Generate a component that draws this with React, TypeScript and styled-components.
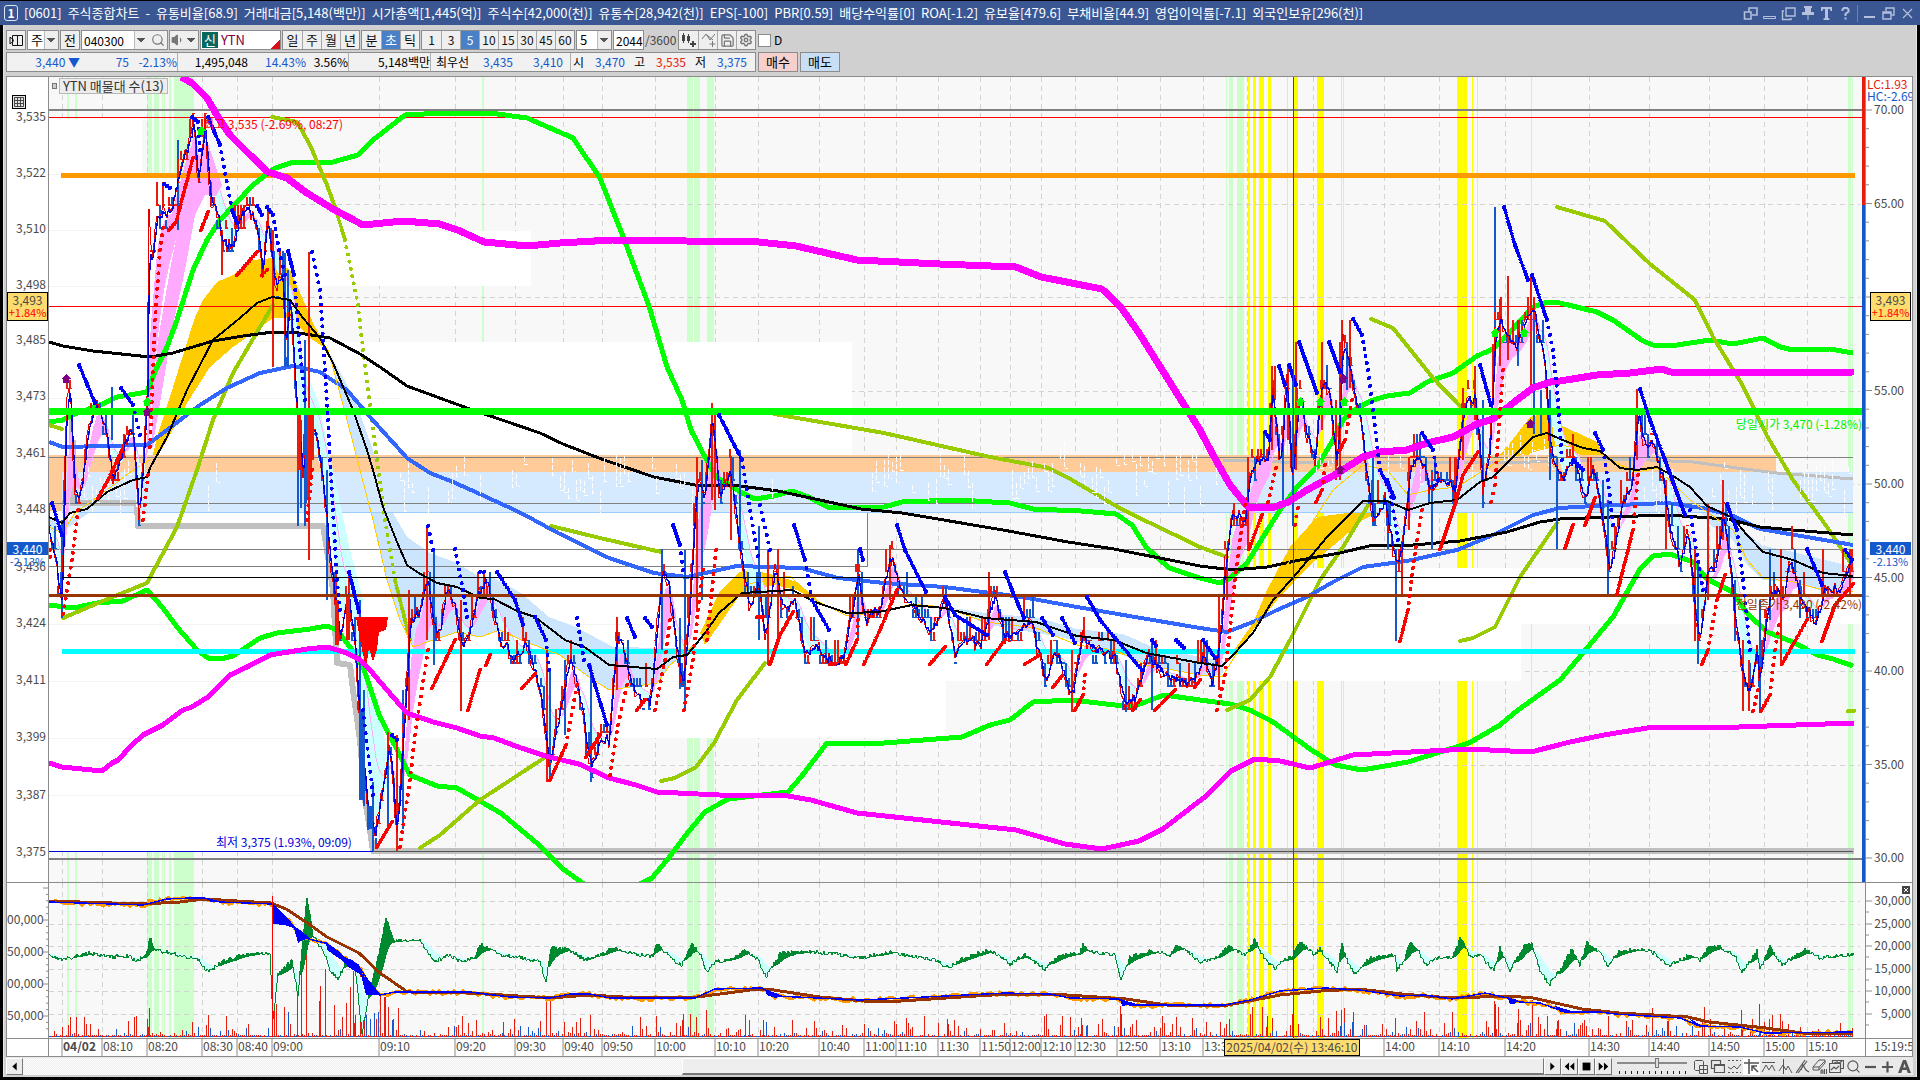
import React from "react";
import styled, { createGlobalStyle, css } from "styled-components";
import { Search, Settings, Save, Pin, Volume1 } from "lucide-react";

/* ---------- palette ---------- */
const C = {
  title: "#3a5693",
  bar: "#d0d0d0",
  line: "#8c8c8c",
  plot: "#f8f8f8",
  grid: "#d3d3d3",
  red: "#e81c0c",
  blue: "#1458cc",
  ink: "#4a4a4a",
  mint: "#ccffcc",
  badge: "#ffdc6e",
};
const FONT = '"Noto Sans CJK KR", "Liberation Sans", sans-serif';

const Global = createGlobalStyle`
  *, *::before, *::after { box-sizing: border-box; }
  html, body, #root { margin: 0; height: 100%; }
  body { background: #000; font-family: ${FONT}; font-size: 12px; line-height: 16px; color: #000; }
  button, input, select { font: inherit; color: inherit; margin: 0; padding: 0; border-radius: 0; }
`;

/* ---------- window frame ---------- */
const Frame = styled.div`
  display: flex;
  flex-direction: column;
  height: 100vh;
  min-height: 560px;
  padding: 1px 0 3px;
  background: #000;
`;
const TitleBar = styled.header`
  display: flex;
  align-items: center;
  justify-content: space-between;
  height: 24px;
  padding: 0 5px 0 4px;
  background: ${C.title};
  color: #fff;
`;
const TitleText = styled.h1`
  display: flex;
  align-items: center;
  gap: 6px;
  margin: 0;
  font-size: 13px;
  font-weight: 400;
  white-space: nowrap;
`;
const WinIndex = styled.span`
  width: 14px;
  height: 16px;
  border: 1px solid #dfe6f5;
  border-radius: 3px;
  font-size: 12px;
  font-weight: 700;
  line-height: 14px;
  text-align: center;
`;
const TitleTools = styled.div`
  display: flex;
  align-items: center;
  gap: 4px;
`;
const TitleButton = styled.button`
  display: grid;
  place-items: center;
  width: 15px;
  height: 18px;
  border: 0;
  background: none;
  color: #b4c0dc;
  svg { display: block; }
`;
const TitleRule = styled.span`
  width: 1px;
  height: 17px;
  background: #6d82b3;
`;
const Body = styled.main`
  flex: 1;
  min-height: 0;
  display: flex;
  flex-direction: column;
  margin: 0 3px;
  padding: 0 3px 2px 2px;
  background: ${C.bar};
  border-left: 1px solid #e6e6e6;
  border-right: 1px solid #e6e6e6;
`;

/* ---------- tool bar ---------- */
const ToolRow = styled.div`
  display: flex;
  align-items: center;
  height: 27px;
  padding-top: 3px;
  gap: 1px;
  font-size: 13px;
`;
const Group = styled.div`
  display: flex;
  height: 20px;
  border: 1px solid ${C.line};
  background: #f2f2f2;
`;
const ToolButton = styled.button<{ $w?: number; $on?: boolean; $dim?: boolean; $num?: boolean }>`
  display: grid;
  place-items: center;
  width: ${(p) => p.$w ?? 19}px;
  height: 18px;
  border: 0;
  background: ${(p) => (p.$on ? "#4a80c8" : "#efefef")};
  color: ${(p) => (p.$on ? "#fff" : p.$dim ? "#777" : "#111")};
  font-size: ${(p) => (p.$num ? 12 : 13)}px;
  & + & { border-left: 1px solid #a8a8a8; }
`;
const Pick = styled.select<{ $w: number }>`
  width: ${(p) => p.$w}px;
  height: 18px;
  padding: 0 0 0 3px;
  border: 0;
  appearance: none;
  background: linear-gradient(#555, #555) no-repeat right 3px top 7px / 8px 1px,
    linear-gradient(#555, #555) no-repeat right 4px top 8px / 6px 1px,
    linear-gradient(#555, #555) no-repeat right 5px top 9px / 4px 1px,
    linear-gradient(#555, #555) no-repeat right 6px top 10px / 2px 1px,
    linear-gradient(#eee, #eee) no-repeat right 0 top 0 / 13px 18px,
    linear-gradient(#bbb, #bbb) no-repeat right 13px top 0 / 1px 18px, #fff;
`;
const Field = styled.input<{ $w: number }>`
  width: ${(p) => p.$w}px;
  height: 18px;
  padding-left: 2px;
  border: 0;
  outline: 0;
  background: #fff;
  font-size: 12px;
`;
const NameField = styled.div`
  display: flex;
  align-items: center;
  width: 81px;
  height: 20px;
  border: 1px solid ${C.line};
  background: linear-gradient(135deg, #fff 0 90%, #d8101c 90%);
  color: #7a0040;
`;
const NewMark = styled.span`
  width: 16px;
  height: 16px;
  margin: 0 3px 0 1px;
  background: #08685e;
  color: #fff;
  text-align: center;
`;
const TickLabel = styled.label`
  display: flex;
  align-items: center;
  gap: 3px;
  padding-left: 1px;
  font-size: 12px;
  input {
    width: 13px;
    height: 13px;
    border: 1px solid ${C.line};
    background: #fff;
    appearance: none;
  }
`;
const Muted = styled.span`
  width: 32px;
  color: #444;
  font-size: 12px;
`;

/* ---------- quote strip ---------- */
const QuoteRow = styled.div`
  display: flex;
  gap: 2px;
  height: 20px;
  margin-bottom: 4px;
`;
const Quotes = styled.dl`
  display: flex;
  align-items: center;
  height: 20px;
  width: 750px;
  margin: 0;
  border: 1px solid ${C.line};
  background: #f1f1f1;
  white-space: nowrap;
`;
const Quote = styled.dd<{ $w: number; $tone?: string; $rule?: boolean }>`
  width: ${(p) => p.$w}px;
  height: 18px;
  margin: 0;
  line-height: 18px;
  text-align: right;
  color: ${(p) => p.$tone ?? "#000"};
  ${(p) => p.$rule && css`border-right: 1px solid #b0b0b0;`}
`;
const OrderButton = styled.button<{ $bg: string }>`
  width: 40px;
  height: 20px;
  border: 1px solid ${C.line};
  background: ${(p) => p.$bg};
  font-size: 13px;
  line-height: 16px;
`;

/* ---------- chart panel ---------- */
const Panel = styled.section`
  flex: 1;
  min-height: 0;
  display: grid;
  grid-template-columns: 42px minmax(0, 1fr) 47px;
  grid-template-rows: minmax(0, 1fr) 156px 17px;
  border: 1px solid ${C.line};
  background: #fff;
`;
const AxisCell = styled.div<{ $side: "left" | "right"; $last?: boolean }>`
  position: relative;
  min-width: 0;
  min-height: 0;
  overflow: hidden;
  border-bottom: ${(p) => (p.$last ? 0 : 1)}px solid ${C.line};
  ${(p) =>
    p.$side === "left"
      ? css`border-right: 1px solid ${C.line};`
      : css`border-left: 1px solid ${C.line};`}
`;
const PlotCell = styled.div<{ $last?: boolean }>`
  position: relative;
  min-width: 0;
  min-height: 0;
  overflow: hidden;
  border-bottom: ${(p) => (p.$last ? 0 : 1)}px solid ${C.line};
  background: ${(p) => (p.$last ? "#fff" : C.plot)};
`;
const Sheet = styled.svg`
  display: block;
  width: 100%;
  height: 100%;
`;
const Overlay = styled(Sheet)`
  position: absolute;
  inset: 0;
`;
const AxisText = styled.text<{ $tone?: string; $bold?: boolean }>`
  font-family: ${FONT};
  font-size: 12px;
  font-weight: ${(p) => (p.$bold ? 700 : 400)};
  fill: ${(p) => p.$tone ?? C.ink};
`;
const Legend = styled.div`
  position: absolute;
  top: 1px;
  left: 3px;
  display: flex;
  align-items: center;
  gap: 2px;
  &::before {
    content: "";
    width: 5px;
    height: 6px;
    border: 1px solid #777;
    background: #ccc;
  }
`;
const LegendBox = styled.span`
  padding: 0 3px;
  border: 1px solid #b8b8b8;
  background: #ededed;
  color: #333;
  font-size: 13px;
  line-height: 14px;
`;
const GridToggle = styled.button`
  position: absolute;
  top: 18px;
  left: 5px;
  width: 14px;
  height: 14px;
  border: 1px solid #000;
  background: #e4e4e4;
  svg { display: block; }
`;
const PriceTag = styled.div<{ $top: string; $left: number }>`
  position: absolute;
  top: ${(p) => p.$top};
  left: ${(p) => p.$left}px;
  width: 41px;
  height: 29px;
  border: 1px solid #000;
  background: ${C.badge};
  color: ${C.ink};
  line-height: 13px;
  text-align: center;
  white-space: nowrap;
  em { display: block; color: red; font-size: 11px; font-style: normal; }
`;
const LastTag = styled.div<{ $top: string; $left: number }>`
  position: absolute;
  top: ${(p) => p.$top};
  left: ${(p) => p.$left}px;
  width: 41px;
  color: ${C.blue};
  font-size: 11px;
  line-height: 13px;
  text-align: center;
  white-space: nowrap;
  b {
    display: block;
    height: 13px;
    background: ${C.blue};
    color: #fff;
    font-size: 12px;
    font-weight: 400;
  }
`;
const CloseSub = styled.button`
  position: absolute;
  top: 3px;
  right: 2px;
  display: grid;
  width: 8px;
  height: 8px;
  border: 0;
  background: #444;
  color: #fff;
`;
const TimeTag = styled.div`
  position: absolute;
  top: 0;
  left: 64.7%;
  width: 136px;
  height: 17px;
  border: 1px solid #000;
  background: ${C.badge};
  color: ${C.ink};
  line-height: 14px;
  text-align: center;
  white-space: nowrap;
`;

/* ---------- bottom strip ---------- */
const BottomRow = styled.footer`
  display: flex;
  align-items: center;
  height: 18px;
  background: #e9e9e9;
`;
const NavButton = styled.button`
  display: grid;
  place-items: center;
  flex: none;
  width: 17px;
  height: 17px;
  border: 1px solid;
  border-color: #fff #777 #777 #fff;
  background: #ececec;
`;
const Track = styled.div`
  flex: 1;
  display: flex;
  justify-content: flex-end;
  height: 17px;
  background: repeating-conic-gradient(#ffffff 0 25%, #ececec 0 50%) 0 0 / 2px 2px;
`;
const Thumb = styled.div`
  width: 56.7%;
  height: 17px;
  border: 1px solid;
  border-color: #fff #777 #777 #fff;
  border-bottom-width: 2px;
  background: #eeeeee;
`;
const Zoomer = styled.label`
  width: 80px;
  height: 17px;
  padding: 0 5px;
  input {
    display: block;
    width: 70px;
    height: 11px;
    margin: 0;
    appearance: none;
    background: linear-gradient(#8a8a8a, #8a8a8a) no-repeat 0 4px / 100% 2px;
  }
  input::-webkit-slider-thumb {
    appearance: none;
    width: 4px;
    height: 10px;
    border: 1px solid #777;
    background: #ddd;
  }
  &::after {
    content: "";
    display: block;
    width: 67px;
    height: 3px;
    margin: 2px 0 0 2px;
    background: repeating-linear-gradient(90deg, #222 0 1px, transparent 1px 6px);
  }
`;
const IconButton = styled.button<{ $on?: boolean }>`
  display: grid;
  place-items: center;
  width: 17px;
  height: 17px;
  border: 0;
  background: ${(p) => (p.$on ? "#fff" : "none")};
  color: #555;
  svg { display: block; }
`;

/* ---------- helpers ---------- */
type Pt = [number, number];
const pts = (s: string): Pt[] =>
  s.trim().split(/\s+/).map((p) => p.split(",").map(Number) as Pt);
const join = (a: Pt[]) => a.map((p) => `${p[0].toFixed(1)},${p[1].toFixed(1)}`).join(" ");
const rng = (seed: number) => () => {
  seed = (seed * 1664525 + 1013904223) % 4294967296;
  return seed / 4294967296;
};
const sample = (a: Pt[], step: number): Pt[] => {
  const out: Pt[] = [];
  let i = 0;
  for (let x = a[0][0]; x <= a[a.length - 1][0]; x += step) {
    while (i < a.length - 2 && a[i + 1][0] < x) i++;
    const [x0, y0] = a[i];
    const [x1, y1] = a[i + 1];
    out.push([x, y0 + ((y1 - y0) * (x - x0)) / (x1 - x0 || 1)]);
  }
  return out;
};
const ema = (a: Pt[], n: number): Pt[] => {
  let v = a[0][1];
  return a.map(([x, y]) => {
    v += (y - v) * (2 / (n + 1));
    return [x, v];
  });
};
const between = (a: Pt[], b: Pt[], above: boolean) =>
  a
    .map(([x, y], i) => {
      const w = b[i][1];
      return (above ? y < w - 1 : y > w + 1) ? `M${x} ${y.toFixed(1)}V${w.toFixed(1)}` : "";
    })
    .join("");

/* plot coordinate windows */
const MAIN = { x: 49, y: 77, w: 1816, h: 805 };
const SUB = { x: 49, y: 883, w: 1816, h: 155 };
const px = (x: number) => `${((x - MAIN.x) / MAIN.w) * 100}%`;
const py = (y: number) => `${((y - MAIN.y) / MAIN.h) * 100}%`;
const sy = (y: number) => `${((y - SUB.y) / SUB.h) * 100}%`;

/* ---------- data ---------- */
const TIMES: [number, string][] = [
  [62, "04/02"], [102, "08:10"], [147, "08:20"], [202, "08:30"], [237, "08:40"], [272, "09:00"],
  [379, "09:10"], [455, "09:20"], [515, "09:30"], [563, "09:40"], [602, "09:50"], [655, "10:00"],
  [715, "10:10"], [758, "10:20"], [819, "10:40"], [864, "11:00"], [896, "11:10"], [938, "11:30"],
  [980, "11:50"], [1010, "12:00"], [1041, "12:10"], [1075, "12:30"], [1117, "12:50"],
  [1160, "13:10"], [1203, "13:30"], [1247, ""], [1313, ""], [1384, "14:00"], [1439, "14:10"],
  [1505, "14:20"], [1589, "14:30"], [1649, "14:40"], [1709, "14:50"], [1764, "15:00"], [1807, "15:10"],
];
const PRICES: [number, string][] = [
  [117, "3,535"], [173, "3,522"], [229, "3,510"], [285, "3,498"], [340, "3,485"], [396, "3,473"],
  [453, "3,461"], [509, "3,448"], [567, "3,436"], [623, "3,424"], [680, "3,411"], [737, "3,399"],
  [795, "3,387"], [852, "3,375"],
];
const RATES = [70, 65, 60, 55, 50, 45, 40, 35, 30].map(
  (v, i) => [110 + i * 93.5, `${v}.00`] as [number, string]
);
const VOLS: [number, string][] = [
  [901, "30,000"], [924, "25,000"], [946, "20,000"], [969, "15,000"], [991, "10,000"], [1014, "5,000"],
];
const MINT: Pt[] = pts(
  "67,2 75,2 147,5 154,5 162,1 164,1 169,2 174,20 482,2 687,6 694,6 707,7 1226,1 1229,4 1237,7 1848,3 1852,1"
);
const SUN: Pt[] = pts(
  "1248,2 1253,3 1259,5 1268,3 1287,1 1294,4 1317,7 1341,1 1343,1 1457,10 1472,1 1477,1 1531,1"
);
const PROFILE: [number, number, number][] = [
  [119, 174, 142], [174, 231, 207], [231, 286, 531], [286, 342, 290], [342, 398, 852], [398, 455, 852],
  [511, 568, 867], [568, 624, 1863], [624, 681, 1521], [681, 738, 946], [738, 795, 415], [795, 851, 372],
];

const magentaTop = `181,77 192,83 207,98 218,117 230,135 250,155 268,172 287,178 307,193 333,209 350,218 363,225
 403,221 440,224 460,231 484,242 527,246 560,243 612,240 759,242 796,246 857,260 940,264 1016,267 1041,277 1102,289
 1120,306 1139,333 1176,392 1200,430 1213,455 1230,485 1248,507 1272,508 1288,502 1307,490 1338,473 1363,457
 1380,452 1407,450 1427,443 1453,437 1477,424 1493,419 1513,403 1533,388 1550,382 1560,381 1597,375 1630,373
 1662,369 1670,372 1713,373 1854,372`;
const magentaLow = `49,763 62,767 102,771 112,763 118,760 132,745 143,735 163,725 183,710 192,707 208,697 217,688
 230,675 247,667 270,655 307,649 327,647 347,653 360,660 370,670 387,690 407,713 433,722 457,728 480,736 494,738
 521,748 549,757 579,764 609,778 636,785 657,792 719,795 788,796 811,800 857,813 1016,830 1065,844 1102,849
 1139,841 1163,829 1206,796 1231,771 1255,759 1280,761 1310,768 1353,755 1469,749 1531,752 1570,742 1604,735
 1653,727 1739,727 1854,723`;
const greenTop = `49,422 63,420 72,415 100,405 117,397 147,392 157,367 167,347 177,320 193,270 207,240 220,220
 253,185 273,169 293,162 333,162 358,155 373,140 405,115 443,113 490,113 527,118 573,138 600,178 624,239 649,306
 667,367 682,400 691,430 705,457 716,477 730,485 742,493 755,499 774,496 792,491 811,498 827,507 884,507 902,502
 957,500 1010,503 1033,509 1081,511 1116,514 1132,525 1146,547 1169,568 1200,578 1220,583 1230,578 1247,563
 1263,537 1280,510 1297,487 1317,467 1333,440 1343,420 1357,408 1373,400 1387,396 1410,393 1427,382 1453,373
 1477,356 1493,349 1510,332 1533,307 1547,302 1560,303 1597,312 1613,320 1643,341 1653,345 1677,345 1710,340
 1733,344 1763,338 1780,347 1793,350 1830,349 1853,353`;
const greenLow = `49,605 73,608 97,603 123,601 147,590 163,608 177,627 197,650 208,658 220,659 233,656 260,638
 277,633 310,629 327,626 337,630 350,647 363,667 380,717 392,740 410,775 437,786 457,788 480,801 502,814 539,845
 563,869 584,884`;
const greenLow2 = `640,884 652,878 667,860 685,836 705,812 728,799 788,792 801,777 827,743 884,743 962,737 990,725
 1010,720 1033,702 1072,700 1132,707 1164,695 1200,700 1230,704 1250,710 1273,722 1310,749 1335,765 1362,770
 1408,762 1469,743 1500,725 1518,710 1560,680 1583,653 1613,617 1640,569 1653,556 1670,554 1693,562 1707,579
 1733,592 1747,613 1767,632 1793,642 1817,655 1833,659 1853,666`;
const blackSlow = `49,342 63,346 93,351 150,357 173,353 213,341 243,336 273,332 293,332 330,338 360,354 380,367
 407,386 467,408 540,433 563,444 604,460 654,477 700,486 733,485 778,491 829,502 861,509 902,513 1003,530 1068,542
 1114,549 1200,566 1233,570 1267,567 1300,560 1340,553 1373,545 1413,545 1460,541 1507,532 1540,522 1560,519
 1610,517 1667,515 1727,519 1760,527 1793,530 1853,535`;
const blueSlow = `49,442 63,447 147,445 167,430 200,405 227,388 260,373 293,366 320,372 347,390 370,417 407,458
 430,473 453,482 480,494 521,513 558,533 609,558 654,573 687,577 737,566 801,568 838,578 884,583 944,587 1022,597
 1077,607 1141,618 1200,628 1227,632 1253,622 1277,610 1307,597 1333,582 1363,567 1407,561 1457,550 1493,535
 1533,515 1560,508 1593,506 1667,503 1703,508 1733,516 1760,529 1807,537 1853,545`;
const blackFast = `49,517 62,523 70,513 87,509 107,492 133,480 147,477 150,468 167,437 187,390 213,340 240,318
 257,303 272,297 290,300 303,318 320,338 333,363 353,410 367,450 373,470 383,507 397,542 407,565 417,572 437,583
 457,587 480,598 494,599 517,611 535,617 565,640 586,648 609,665 657,669 673,657 687,655 705,633 719,613 742,593
 792,590 815,602 847,613 879,612 912,605 944,608 985,618 1036,622 1077,636 1114,640 1146,653 1200,663 1222,666
 1233,655 1253,633 1273,600 1297,573 1327,537 1347,517 1363,501 1387,501 1408,510 1430,503 1457,500 1480,482
 1493,477 1510,460 1533,437 1547,433 1560,439 1583,448 1600,451 1620,468 1637,470 1657,467 1673,476 1690,487
 1707,506 1733,518 1747,535 1763,552 1793,560 1823,573 1853,576`;
const YELLOW_THIN = [
  "49,527 62,533 75,513 107,490 133,470 150,460",
  `328,350 335,375 347,420 360,470 373,520 387,580
 400,620 413,647 433,640 457,632 480,637 500,630 521,640 560,655 586,675 609,690 657,683 670,665 700,640 742,585
 790,576 815,600 847,616 879,612 912,604 944,607 985,622 1036,628 1077,645 1114,650 1146,665 1200,675 1222,677
 1253,627 1290,560 1320,510 1333,490 1363,465 1387,470 1408,495 1430,490 1457,487 1500,460 1560,445 1600,452
 1620,465 1637,472 1657,468 1690,500 1733,530 1747,560 1763,578 1793,582 1823,590 1853,592`,
];
const OLIVE = [
  "49,425 62,429",
  "63,618 110,598 147,583 177,527 197,470 213,420 233,373 273,305",
  "272,117 297,122 310,145 327,185 335,207",
  "420,848 440,835 480,800 544,758",
  "551,526 600,538 661,552",
  "661,781 675,778 696,767 714,743 737,700 765,663",
  "774,414 884,433 990,457 1049,468 1072,480 1123,510 1200,547 1227,557",
  "1227,710 1250,700 1270,677 1290,640 1320,580 1343,547 1370,502",
  "1371,319 1393,328 1433,378 1462,408",
  "1460,641 1473,638 1495,627 1520,577 1557,523",
  "1557,207 1605,221 1650,264 1695,300 1713,337 1743,386 1767,436 1793,480 1827,527 1850,562",
  "1848,711 1854,711",
];
const OLIVE_DOTS = "335,207 345,240 358,305 363,350 370,405 377,460 385,520 395,580 410,640";
const GREY_STEP = `62,503 137,503 138,526 323,526 327,550 333,590 337,663 350,665 353,690 360,740 365,800 370,830
 373,851 1854,851`;
const GREY_HIGH = "1223,460 1310,463 1400,462 1500,463 1627,459 1693,462 1737,468 1777,473 1853,479";

const AMBER = [
  "150,468 157,437 173,387 195,317 203,300 217,282 233,275 253,260 273,258 290,270 302,297 313,323 328,350 313,340 300,328 290,318 273,318 257,330 233,347 210,367 187,403 167,440 150,470",
  "700,633 719,593 739,572 751,570 774,575 797,582 820,602 810,598 797,590 774,585 742,592 719,625 705,645",
  "1233,652 1253,623 1267,590 1290,547 1317,517 1355,512 1380,512 1363,520 1340,540 1310,565 1277,600 1253,630 1237,652",
  "1477,472 1493,463 1510,443 1530,417 1547,413 1560,425 1580,434 1597,442 1603,455 1580,455 1560,445 1547,448 1535,450 1515,465 1505,472",
];
const SKY = [
  "328,350 340,372 355,400 373,450 393,513 407,537 430,553 457,563 480,577 494,578 521,593 549,617 576,627 613,647 664,648 687,647 687,655 670,665 657,683 609,690 586,675 560,655 521,640 500,630 480,637 457,632 433,640 413,647 400,620 387,580 373,520 360,470 347,420 335,375",
  "953,608 985,613 1040,618 1077,629 1123,634 1155,648 1200,657 1225,662 1222,675 1200,675 1146,664 1110,650 1060,637 985,624",
  "1690,495 1717,514 1747,533 1763,546 1793,552 1853,567 1853,592 1820,590 1790,582 1763,580 1747,565 1733,540 1710,525",
  "49,517 62,526 80,512 107,480 133,474 133,470 107,500 62,532 49,527",
];

const PRICE = pts(`49,530 55,560 62,605 66,400 70,388 75,500 80,500 88,430 97,402 105,430 113,480 125,440 133,430
 137,490 139,522 145,430 148,380 149,215 152,260 157,215 170,210 175,190 180,165 187,155 194,119 198,190 205,120
 210,200 216,210 222,240 232,250 240,215 250,210 257,230 263,270 268,215 275,290 282,270 286,350 290,290 296,400
 303,480 307,420 315,430 325,500 330,560 340,640 348,590 355,650 362,750 368,810 375,840 380,800 390,745 397,840
 403,740 410,620 420,610 427,575 434,630 440,635 446,585 455,610 462,650 470,630 480,590 486,580 500,640 515,660
 525,640 540,690 549,770 558,720 570,655 580,700 591,770 600,740 609,740 617,630 625,660 638,700 650,705 662,570
 668,580 675,640 683,690 690,600 697,480 704,500 712,420 720,500 730,470 740,550 750,610 758,580 765,640 775,570
 783,610 795,600 805,660 815,645 830,662 843,655 858,575 865,620 880,610 890,555 900,590 915,610 930,635 945,600
 955,660 965,640 980,645 995,595 1005,640 1030,620 1045,680 1057,650 1072,700 1082,635 1095,650 1115,660 1125,705
 1135,700 1148,655 1160,670 1175,680 1190,687 1205,655 1212,688 1222,620 1225,560 1232,512 1245,520 1250,470
 1258,460 1268,460 1272,385 1280,470 1287,375 1292,490 1300,385 1305,430 1315,460 1322,375 1330,400 1337,470
 1343,340 1350,370 1360,420 1367,480 1373,515 1385,500 1396,570 1402,550 1410,465 1420,455 1430,490 1445,480
 1455,490 1463,410 1475,395 1483,490 1490,450 1495,335 1500,320 1515,350 1520,335 1533,305 1545,370 1550,450
 1557,470 1563,480 1573,460 1585,500 1592,465 1603,520 1610,580 1620,510 1632,480 1638,410 1645,450 1652,445
 1663,480 1670,530 1680,565 1688,530 1695,615 1700,640 1708,565 1715,570 1723,515 1730,560 1735,620 1743,680
 1750,695 1757,650 1760,685 1768,600 1775,590 1783,600 1790,558 1800,600 1810,615 1815,630 1825,585 1840,590
 1853,560`);
const SPIKES: [number, number, number, 0 | 1][] = [
  [62, 520, 618, 1], [112, 387, 440, 1], [178, 140, 230, 1], [222, 230, 275, 0], [273, 230, 367, 0],
  [285, 253, 367, 1], [288, 270, 367, 1], [309, 252, 560, 0], [305, 340, 526, 1], [301, 420, 508, 1],
  [311, 420, 480, 0], [327, 470, 600, 1], [336, 570, 640, 0], [360, 600, 780, 1], [364, 690, 806, 1],
  [368, 800, 830, 1], [373, 782, 851, 1], [388, 735, 829, 1], [397, 735, 851, 0], [403, 690, 829, 1],
  [409, 590, 720, 0], [427, 527, 640, 0], [434, 549, 665, 1], [461, 600, 711, 0], [547, 650, 782, 0],
  [550, 670, 782, 1], [565, 660, 735, 1], [591, 665, 782, 1], [617, 617, 690, 0], [662, 549, 650, 1],
  [680, 618, 689, 1], [685, 550, 710, 1], [697, 457, 610, 0], [702, 460, 600, 1], [712, 415, 500, 0],
  [715, 415, 510, 0], [731, 457, 540, 0], [740, 450, 550, 1], [759, 526, 640, 1], [768, 550, 665, 0],
  [778, 549, 640, 0], [858, 549, 640, 1], [890, 545, 600, 0], [989, 572, 640, 0], [1072, 650, 712, 0],
  [1126, 660, 712, 1], [1152, 640, 710, 1], [1219, 597, 690, 0], [1227, 549, 600, 0], [1248, 457, 549, 0],
  [1272, 366, 450, 0], [1275, 366, 400, 0], [1283, 430, 503, 1], [1288, 366, 440, 0], [1293, 380, 526, 1],
  [1296, 342, 470, 0], [1322, 342, 430, 0], [1340, 342, 480, 0], [1342, 320, 380, 0], [1350, 320, 388, 0],
  [1336, 400, 480, 0], [1347, 342, 390, 1], [1373, 457, 526, 1], [1388, 500, 549, 1], [1396, 549, 641, 1],
  [1402, 549, 595, 0], [1409, 457, 530, 0], [1432, 470, 549, 1], [1455, 457, 503, 0], [1463, 388, 460, 0],
  [1475, 366, 420, 0], [1483, 400, 508, 1], [1493, 344, 400, 0], [1495, 207, 366, 1], [1500, 299, 366, 0],
  [1508, 276, 360, 0], [1518, 320, 366, 1], [1531, 275, 388, 0], [1534, 310, 434, 1], [1541, 390, 434, 1],
  [1550, 390, 480, 1], [1557, 457, 549, 1], [1603, 480, 525, 1], [1608, 500, 594, 1], [1637, 389, 460, 0],
  [1666, 480, 549, 0], [1695, 549, 641, 0], [1698, 560, 664, 1], [1708, 504, 600, 0], [1723, 504, 540, 0],
  [1735, 580, 641, 1], [1743, 640, 711, 0], [1749, 660, 711, 0], [1760, 600, 711, 1], [1781, 549, 664, 0],
  [1770, 549, 620, 1], [1800, 580, 618, 1], [1823, 549, 595, 0], [1850, 549, 595, 0],
];
const SAR_DOWN = `79,365 95,403|121,388 133,405 140,435|164,184 170,188|192,117 198,122 200,150|208,117 220,145 232,210 237,223
|257,206 262,215|267,207 273,215 279,250 285,275|288,251 294,275 300,350 305,400|312,252 320,290 325,370 328,420 330,460 333,510
 337,580 340,610|349,572 359,612|363,710 373,795|392,735 397,740|52,503 62,535|428,526 433,550|455,549 463,590 467,617
|480,572 484,572|497,572 515,600 523,625|535,617 546,640 549,670|577,618 584,660|589,665 607,725|627,618 635,637
|645,618 652,627|673,525 680,545 683,570|719,415 742,460 755,540 758,556|760,505 770,550|794,525 805,560 812,600 829,630
|860,549 863,560|897,525 905,550 926,592|945,597 955,615 987,635|1005,572 1012,590 1024,618|1042,618 1053,635
|1062,618 1075,643|1087,597 1100,620 1115,638 1142,670|1152,640 1156,646|1176,640 1184,648|1203,640 1215,658
|1265,432 1270,440|1279,366 1285,385|1289,365 1296,385|1299,342 1317,393|1329,342 1340,372
|1353,319 1362,335 1368,370 1373,410 1380,470 1390,490 1398,540|1387,480 1394,498|1422,433 1433,450 1438,480
|1480,365 1491,405|1504,207 1515,245 1528,280|1532,275 1547,320 1553,350 1558,400 1562,460|1573,460 1583,470
|1595,433 1603,450 1608,480 1613,525|1640,389 1650,420 1665,460 1685,515|1690,510 1697,555 1703,590
|1727,504 1737,530 1743,580 1750,650|1807,549 1822,585|1845,550 1852,560`;
const SAR_UP = `50,557 50,550|63,614 72,560 78,510|98,498 108,480 122,450|143,520 148,475|150,447 155,320 160,250 163,228
|169,230 176,222 193,158|201,230 208,212|237,275 257,252|262,275 267,270|307,520 312,470|377,847 392,822
|400,847 410,780 415,735 428,650|432,688 455,640|468,710 480,670|486,665 490,655|522,688 535,674
|550,780 566,745 577,685|586,757 600,735|610,775 618,725 627,685|637,710 645,700|655,710 665,660 670,620
|684,710 693,660 698,610 703,570|707,640 712,590 716,550|757,617 763,617|770,664 780,635 793,612|830,664 835,664|846,664 857,640 858,620
|864,664 880,630 897,590|930,664 945,647|987,664 1005,640|1025,664 1040,655|1053,687 1062,676|1075,710 1083,695 1085,675
|1133,710 1140,700|1155,710 1175,690|1195,687 1200,680|1217,710 1225,675 1230,630 1235,580 1240,540 1245,505|1249,549 1262,515
|1268,502 1276,468|1295,525 1298,508|1316,502 1322,490 1325,465|1340,450 1345,440 1352,400
|1400,641 1408,610 1412,575 1417,540 1422,510|1440,549 1455,505 1463,475 1478,452|1491,502 1495,485 1498,440 1503,370
|1565,548 1573,525|1585,525 1595,498|1617,594 1633,530 1638,475|1702,664 1708,650 1717,600 1725,575
|1753,711 1758,690|1761,711 1770,695 1775,650 1779,625|1782,664 1807,620|1822,641 1835,605 1853,584`;

const along = (s: string, gap: number): Pt[] =>
  s.split("|").flatMap((seg) => {
    const p = pts(seg);
    const out: Pt[] = [];
    for (let i = 0; i < p.length - 1; i++) {
      const dx = p[i + 1][0] - p[i][0];
      const dy = p[i + 1][1] - p[i][1];
      const steep = Math.abs(dy / (dx || 1));
      const n = Math.max(1, Math.round(Math.hypot(dx, dy) / (steep > 4 ? gap * 2.5 : gap)));
      for (let k = 0; k <= n; k++) out.push([p[i][0] + (dx * k) / n, p[i][1] + (dy * k) / n]);
    }
    return out;
  });
const dotPath = (a: Pt[]) => a.map(([x, y]) => `M${x.toFixed(1)} ${y.toFixed(1)}h0`).join("");

/* price series with tick noise, and its fast averages */
const series = (() => {
  const r = rng(7);
  return sample(PRICE, 1).map(([x, y]) => [x, y + (r() - 0.5) * 16] as Pt);
})();
const TICK = 22.9;
const snap = (y: number) => 457 + Math.round((y - 457) / TICK) * TICK;
const candles = (() => {
  const r = rng(41);
  let up = "";
  let down = "";
  series.forEach(([x, y], i) => {
    if (i % 3) return;
    const q = snap(y);
    const rise = i > 3 && series[i - 3][1] > y;
    const h = r() < 0.3 ? TICK : r() < 0.2 ? 0 : 8;
    const d = `M${x} ${q.toFixed(1)}V${Math.max(q - h, 119).toFixed(1)}M${x - 1} ${q.toFixed(1)}h3`;
    if (rise) up += d;
    else down += d;
  });
  SPIKES.forEach(([x, a, b, k]) => {
    const d = `M${x} ${a}V${b}`;
    if (k) down += d;
    else up += d;
  });
  return { up, down };
})();
const fast = ema(series, 3);
const mid = ema(series, 9);
const slow = ema(series, 26);

const scribble = (() => {
  const r = rng(99);
  let d = "";
  const run = (x0: number, x1: number, top: number, bot: number, p: number) => {
    let on = false;
    for (let x = x0; x < x1; x += 4) {
      if (r() < 0.12) on = !on;
      if (on && r() < p) {
        const a = top + r() * (bot - top) * 0.8;
        d += `M${x} ${a.toFixed(0)}v${(6 + r() * 26).toFixed(0)}h4`;
      }
    }
  };
  run(60, 700, 455, 500, 0.7);
  run(740, 1220, 440, 500, 0.8);
  run(1215, 1270, 330, 480, 0.9);
  run(1300, 1560, 430, 470, 0.6);
  run(1600, 1850, 460, 500, 0.9);
  return d;
})();

/* sub panel */
const subBrown = `49,901 143,904 180,902 204,899 237,901 271,903 286,909 306,922 327,937 359,953 380,973 406,991
 416,993 449,992 502,995 551,998 588,995 640,998 697,997 758,989 767,989 820,997 864,1001 901,1001 946,998
 1007,994 1052,994 1126,999 1167,1005 1228,1005 1280,995 1321,991 1358,989 1402,994 1451,998 1509,996 1533,998
 1582,1009 1619,1013 1688,1017 1709,1022 1766,1028 1802,1033 1853,1034`;
const subBlue = pts(`49,902 143,905 167,899 190,898 204,898 220,902 272,904 290,922 305,938 325,943 345,958 358,965
 368,980 380,995 395,992 470,992 510,997 550,998 570,994 590,994 610,998 695,998 715,989 762,988 775,996 860,1000
 905,998 1005,993 1050,994 1070,998 1118,999 1130,1005 1225,1005 1250,1000 1280,991 1325,988 1360,990 1400,996
 1425,995 1452,999 1485,993 1508,998 1520,1002 1540,1003 1565,1012 1600,1012 1615,1014 1680,1018 1700,1026
 1740,1027 1765,1033 1853,1032`);
const subBlocks = [
  "273,906 282,912 293,925 300,930 310,938 303,940 298,943 294,928 284,925 273,924",
  "326,942 337,950 345,957 352,960 358,966 365,978 372,985 380,995 366,995 361,975 350,968 340,959 327,950",
  "765,989 783,996 775,998 767,995",
  "1120,999 1137,1004 1128,1005 1122,1006",
  "1508,998 1518,1000 1514,1004 1510,1004",
  "1555,1006 1575,1012 1560,1012",
  "1688,1018 1705,1027 1697,1026",
  "208,898 220,902 210,902",
];
const OSC = pts(`49,955 62,960 90,953 108,957 130,956 137,962 147,953 150,938 155,950 180,955 198,960 208,972 222,962
 240,955 270,954 273,1020 278,975 292,960 298,995 303,940 307,897 313,935 325,955 330,970 338,980 348,958 355,965
 362,1033 370,990 380,950 386,918 394,941 420,940 434,962 450,955 460,962 475,958 480,944 500,955 525,958 540,962
 546,982 551,948 570,950 585,960 600,955 612,948 640,955 653,956 656,943 675,962 682,965 692,944 700,953 707,972
 715,962 735,958 745,950 757,958 766,977 780,954 795,952 830,953 860,958 890,952 935,960 948,968 965,957 990,950
 1010,964 1025,955 1045,969 1060,955 1080,953 1083,943 1090,952 1115,955 1121,981 1130,957 1150,951 1170,955
 1176,945 1190,953 1200,963 1215,958 1230,946 1245,955 1255,940 1265,960 1275,968 1280,963 1293,955 1300,942
 1315,955 1320,949 1330,962 1337,972 1342,944 1347,960 1355,974 1370,958 1395,955 1397,970 1405,960 1409,943
 1418,950 1426,965 1440,957 1452,958 1461,937 1470,957 1480,955 1494,970 1500,948 1510,971 1525,945 1532,944
 1540,970 1549,985 1560,970 1572,949 1580,965 1587,943 1600,952 1608,966 1620,950 1650,950 1668,966 1690,955
 1700,960 1708,948 1720,947 1735,955 1742,973 1757,950 1760,970 1770,947 1782,965 1805,950 1820,958 1853,954`);
const osc = (() => {
  const r = rng(23);
  return sample(OSC, 1).map(([x, y]) => [x, y + (r() - 0.5) * 4] as Pt);
})();
const oscSlow = ema(osc, 20);
const orangeSub = (() => {
  const r = rng(12);
  return sample(subBlue, 3).map(([x, y]) => [x, y + (r() - 0.4) * 4] as Pt);
})();
const volume = (() => {
  const r = rng(5);
  let up = "";
  let down = "";
  for (let x = 50; x < 1853; x += 2) {
    const busy = x > 272 && x < 400 ? 2.6 : x > 1240 && x < 1740 ? 1.4 : 1;
    const v = Math.pow(r(), 5) * 20 * busy + 2;
    if (r() < 0.6) up += `M${x + 0.5} 1037v${-v.toFixed(0)}`;
    else down += `M${x + 0.5} 1037v${(-v * 0.5).toFixed(0)}`;
  }
  const peaks =
    "62,10 147,18 149,29 208,22 272,140 297,60 301,64 306,84 319,36 325,68 346,34 350,50 353,66 360,70 385,40 393,18 468,14 503,15 540,16 546,37 550,39 590,22 656,21 683,23 690,23 706,27 745,22 749,17 763,17 908,14 947,18 1046,23 1081,19 1087,12 1120,31 1176,20 1220,15 1229,18 1252,30 1267,21 1272,19 1341,27 1344,29 1353,25 1395,19 1424,25 1452,25 1494,36 1498,30 1517,14 1532,37 1547,21 1557,16 1582,14 1667,16 1741,27 1759,33 1769,18 1780,23";
  pts(peaks).forEach(([x, h]) => (up += `M${x + 0.5} 1037v${-h}`));
  pts("355,22 385,12 766,15 1121,23 1495,33 1344,14").forEach(([x, h]) => (down += `M${x + 0.5} 1037v${-h}`));
  return { up, down };
})();

const Arrow = ({ x, y, c }: { x: number; y: number; c: string }) => (
  <path d={`M${x} ${y - 5}l5 5h-2v4h-6v-4h-2z`} fill={c} />
);

const Backdrop = ({ top, height, rows }: { top: number; height: number; rows: number[] }) => (
  <>
    {MINT.map(([x, w]) => (
      <rect key={x} x={x} y={top} width={w} height={height} fill={C.mint} />
    ))}
    {SUN.map(([x, w]) => (
      <rect key={x} x={x} y={top} width={w} height={height} fill="#ffff00" />
    ))}
    <path
      d={TIMES.map(([x]) => `M${x + 0.5} ${top}v${height}`).join("") + rows.map((y) => `M49 ${y}H1860`).join("")}
      stroke={C.grid}
      strokeDasharray="5 4"
    />
  </>
);

const MainPlot = () => (
  <Sheet
    viewBox={`${MAIN.x} ${MAIN.y} ${MAIN.w} ${MAIN.h}`}
    preserveAspectRatio="none"
    shapeRendering="crispEdges"
    fill="none"
    strokeLinejoin="round"
    role="img"
    aria-label="YTN 가격 차트"
  >
    <Backdrop top={77} height={805} rows={RATES.slice(1).map(([y]) => y + 0.5)} />
    {PROFILE.map(([a, b, x]) => (
      <rect key={a} x={49} y={a} width={x - 49} height={b - a} fill="#fff" />
    ))}
    <path d="M49 174.5H142M49 230.5H280M49 286.5H280M49 341.5H280M49 398.5H400M49 624.5H700M49 681.5H700M49 738.5H400M49 795.5H370" stroke="#f4f4f4" />
    {AMBER.map((p) => <polygon key={p} points={p} fill="#ffcc00" />)}
    {SKY.map((p) => <polygon key={p} points={p} fill="#cce5ff" />)}
    <rect x={49} y={455} width={1727} height={17} fill="#ffcc99" />
    <rect x={49} y={472} width={13} height={39} fill="#ffcc99" />
    <rect x={62} y={472} width={1791} height={40} fill="#d6eaff" />
    <path d="M62 512.5H1853" stroke="#99ccff" />
    <polyline points={GREY_STEP} stroke="#c0c0c0" strokeWidth={6} />
    <polyline points={GREY_HIGH} stroke="#c0c0c0" strokeWidth={3} />
    <path d="M71 410v93M74 440v60" stroke="#c0c0c0" strokeWidth={4} />
    <path d={between(mid, slow, true)} stroke="#ffaaff" strokeWidth={1.2} />
    <path d={between(mid, slow, false)} stroke="#ccffff" strokeWidth={1.2} />
    <path d="M152 400L158 340L170 270L182 210L192 165L200 155L207 140L222 185L216 196L205 195L195 215L185 270L172 330L163 385L152 450Z" fill="#ffaaff" />
    <path d="M288 310L305 370L318 400L333 470L350 550L363 600L355 625L342 590L325 480L305 420Z" fill="#ccffff" />
    <path d="M365 675L378 700L388 760L380 780L372 770L366 720Z" fill="#ccffff" />
    <path d="M49 457.5H1853M49 503.5H1853M49 549.5H1853M49 566.5H867V513" stroke="#808080" />
    <polyline points={join(slow)} stroke="#ffb0ff" />
    <path d="M49 110H1862M49 858.5H1862" stroke="#808080" strokeWidth={2} />
    <path d="M49 117.5H1862M49 306.5H1862" stroke="#ff0000" />
    <path d="M49 851.5H1853" stroke="#0000dd" />
    <path d="M373 851.5H1853" stroke="#555" />
    <polyline points={greenLow} stroke="#00ff00" strokeWidth={5} />
    <polyline points={greenLow2} stroke="#00ff00" strokeWidth={5} />
    <path d="M62 651.5H1855" stroke="#00ffff" strokeWidth={5} />
    <path d="M61 175.5H1855" stroke="#ff9900" strokeWidth={5} />
    <polyline points={greenTop} stroke="#00ff00" strokeWidth={5} />
    {OLIVE.map((p) => <polyline key={p} points={p} stroke="#99cc00" strokeWidth={4} strokeLinecap="round" />)}
    <path d={dotPath(along(OLIVE_DOTS, 3))} stroke="#99cc00" strokeWidth={4} strokeLinecap="round" />
    <polyline points={blueSlow} stroke="#3366ff" strokeWidth={4} />
    <polyline points={blackSlow} stroke="#000" strokeWidth={3} />
    {YELLOW_THIN.map((p) => <polyline key={p} points={p} stroke="#ffcc00" />)}
    <path d={scribble} stroke="#fff" strokeDasharray="5 2" />
    <path d={candles.down} stroke={C.blue} strokeWidth={1.4} />
    <path d={candles.up} stroke={C.red} strokeWidth={1.4} />
    <polyline points={join(series.filter((_, i) => i % 2 === 0))} stroke="#e80000" />
    <polyline points={join(fast)} stroke="#0000e0" strokeWidth={1.3} />
    <path d="M299 412V470M308 412V500M312 412V460" stroke={C.red} strokeWidth={4} />
    <path d="M306 412V503M298 470V526" stroke={C.blue} strokeWidth={2} />
    <path d="M337 600V645M348 595V640" stroke={C.red} strokeWidth={4} />
    <path d="M370 806V829M362 710V800" stroke={C.blue} strokeWidth={6} />
    <polygon points="356,617 388,617 386,630 379,632 377,650 373,662 369,648 366,668 360,640" fill="#ff0000" />
    <polyline points={blackFast} stroke="#000" strokeWidth={2} />
    <polyline points={magentaLow} stroke="#ff00ff" strokeWidth={5} />
    <polyline points={magentaTop} stroke="#ff00ff" strokeWidth={7} />
    <path d="M49 411.5H1862" stroke="#00ff00" strokeWidth={7} />
    <path d="M62 577.5H1862" stroke="#000" />
    <path d="M49 595.5H1862" stroke="#993300" strokeWidth={3} />
    <path d={dotPath(along(SAR_DOWN, 3))} stroke="#0000ff" strokeWidth={4} strokeLinecap="round" />
    <path d={dotPath(along(SAR_UP, 3))} stroke="#ff0000" strokeWidth={4} strokeLinecap="round" />
    {pts("201,131 147,402 1300,402 1320,402 1344,402 1495,333 1524,333").map(([x, y]) => (
      <Arrow key={x} x={x} y={y} c="#00ff00" />
    ))}
    {pts("66,379 147,412 1343,379 1340,470 1530,424").map(([x, y]) => (
      <Arrow key={x} x={x} y={y} c="#800080" />
    ))}
    <path d="M1293.5 77V882" stroke="#ff0000" />
    <rect x={1862} y={77} width={3} height={128} fill={C.red} />
    <rect x={1862} y={205} width={3} height={677} fill={C.blue} />
  </Sheet>
);

const SubPlot = () => (
  <Sheet
    viewBox={`${SUB.x} ${SUB.y} ${SUB.w} ${SUB.h}`}
    preserveAspectRatio="none"
    shapeRendering="crispEdges"
    fill="none"
    role="img"
    aria-label="거래량 차트"
  >
    <Backdrop top={883} height={155} rows={VOLS.map(([y]) => y + 0.5)} />
    <path d={volume.up} stroke={C.red} />
    <path d={volume.down} stroke={C.blue} />
    <path d="M49 1036.5H1853" stroke={C.red} />
    <path d="M49 1036.5H1853" stroke={C.blue} strokeDasharray="3 4" />
    <path d={between(osc, oscSlow, false)} stroke="#ccffff" strokeWidth={1.2} />
    <path d={between(osc, oscSlow, true)} stroke="#008a30" strokeWidth={1.2} />
    <polyline points={join(osc)} stroke="#008a30" />
    <polyline points={join(orangeSub)} stroke="#ff9900" strokeWidth={3} />
    <polyline points={subBrown} stroke="#993300" strokeWidth={3} />
    {subBlocks.map((p) => <polygon key={p} points={p} fill="#0000ff" />)}
    <polygon points="147,899 159,900 153,902 147,904" fill="#ff9900" />
    <polyline points={join(subBlue)} stroke="#0000ff" strokeWidth={1.4} />
    <path d="M272.5 896V1037M1293.5 883V1038" stroke="#ff0000" />
  </Sheet>
);

/* ---------- small glyphs ---------- */
const G = ({ d, w = 15, fill = "none", sw = 1 }: { d: string; w?: number; fill?: string; sw?: number }) => (
  <svg width={w} height={w} viewBox="0 0 15 15" fill={fill} stroke={fill === "none" ? "currentColor" : "none"} strokeWidth={sw} aria-hidden="true">
    <path d={d} />
  </svg>
);
const TITLE_ICONS: [string, React.ReactNode][] = [
  ["분리", <G sw={1.6} d="M6 6V2h8v7H9M1.500 6H8v7H1.500z" />],
  ["접기", <G d="M1.500 10.500h12v2h-12z" />],
  ["겹치기", <G sw={1.4} d="M5 2h9v8H5zM3 5H1.500v8.500H10V12" />],
  ["고정", <G fill="currentColor" d="M4 0h8v2h-1v4h3v3H8.500v5h-1V9H2V6h3V2H4z" />],
  ["글자", <G fill="currentColor" d="M2 1h11v4h-1.500l-.7-2H9v9l1.500.5V14h-6v-1.500L6 12V3H4.200l-.7 2H2z" />],
  ["도움말", <G sw={2} d="M4.500 5V3.500L6 2h3l1.500 1.500v2L7.500 8v2M7.500 11.500v2" />],
];
const WIN_ICONS: [string, React.ReactNode][] = [
  ["최소화", <G sw={2} d="M2 11h11" />],
  ["복원", <G sw={1.4} d="M5 5V2h8v7h-3M2 6h8v7H2zM2 7h8" />],
  ["닫기", <G sw={1.2} d="M3 3l9 9M12 3l-9 9" />],
];
const TOOL_ICONS: [string, React.ReactNode][] = [
  ["새 창", <G d="M10.500 6V2.500l-1-1h-7l-1 1v8l1 1H6M6.500 6.500h8v8h-8zM6.500 10.500h8M10.500 6.500v8" />],
  ["창 겹침", <G sw={1.2} d="M5 9.500H1.500v-8h9V5M4.500 5.500h10v8h-10zM4.500 6.500h10" />],
  ["구간", <G d="M1 1.500h2M5 1.500h2M9 1.500h2M13 1.500h1M1 13.500h2M5 13.500h2M9 13.500h2M13 13.500h1M1 8l3 2 3-3 3 3 4-5" />],
  ["십자선", <G sw={1.6} d="M0 4h15M5 0v15M8 7l6 6M8 12V7h5" />],
  ["추세", <G d="M1 3.500h13M1 13l4-7 3 5 3-5 3 6" />],
  ["세로선", <G d="M5.500 0v15M1 12l4-6 3 5 2-4 4 7" />],
  ["사선", <G sw={1.2} d="M1 14L10 1M3 14L12 2M6 11l2-5 3 5 3 2" />],
  ["모두 지우기", <G d="M1 8l6-7h6v3l-6 7H1zM1 8h6v3M7 8l6-6M9 15v-4h2v4M9 13h2M12.500 10v5M14.500 10v5" />],
  ["차트 복사", <G sw={1.2} d="M3.500 4V1.500h11v8H12M.500 4.500h11v9H.500zM2 11l3-3 2 2 3-3M5 4l3-1 2 1 3-2" />],
  ["돋보기", <Search size={15} strokeWidth={1.8} />],
  ["축소", <G sw={2.2} d="M2 8h11" />],
  ["확대", <G sw={2.2} d="M2 8h11M7.500 2.500v11" />],
  ["글꼴", <G fill="#555" d="M6 1h3l5 13h-3.300l-1-3H5.300l-1 3H1zM7.500 4.500L6.200 8.500h2.600z" />],
];

const TITLE = [
  "[0601]", "주식종합차트", "-", "유통비율[68.9]", "거래대금[5,148(백만)]", "시가총액[1,445(억)]",
  "주식수[42,000(천)]", "유통수[28,942(천)]", "EPS[-100]", "PBR[0.59]", "배당수익률[0]", "ROA[-1.2]",
  "유보율[479.6]", "부채비율[44.9]", "영업이익률[-7.1]", "외국인보유[296(천)]",
];

export default function App() {
  return (
    <>
      <Global />
      <Frame>
        <TitleBar>
          <TitleText>
            <WinIndex>1</WinIndex>
            {TITLE.map((t) => <span key={t}>{t}</span>)}
          </TitleText>
          <TitleTools>
            {TITLE_ICONS.map(([n, i]) => <TitleButton key={n} aria-label={n}>{i}</TitleButton>)}
            <TitleRule />
            {WIN_ICONS.map(([n, i]) => <TitleButton key={n} aria-label={n}>{i}</TitleButton>)}
          </TitleTools>
        </TitleBar>
        <Body>
          <ToolRow>
            <Group><ToolButton $w={18} aria-label="목록"><G d="M3.500 2.500h10v10h-10zM8.500 2.500v10M1 4l4 3.500L1 11z" /></ToolButton></Group>
            <Group><Pick $w={30} aria-label="시장" defaultValue="주"><option>주</option></Pick></Group>
            <Group><ToolButton $w={18}>전</ToolButton></Group>
            <Group>
              <Field $w={52} aria-label="종목코드" defaultValue="040300" />
              <Pick $w={14} aria-label="최근 종목" defaultValue=""><option value="" /></Pick>
              <ToolButton $w={19} $dim aria-label="종목 검색"><Search size={14} /></ToolButton>
            </Group>
            <Group>
              <ToolButton $w={15} $dim aria-label="음성"><Volume1 size={14} fill="currentColor" /></ToolButton>
              <Pick $w={13} aria-label="음성 설정" defaultValue=""><option value="" /></Pick>
            </Group>
            <NameField><NewMark>신</NewMark>YTN</NameField>
            <Group>{["일", "주", "월", "년"].map((t) => <ToolButton key={t}>{t}</ToolButton>)}</Group>
            <Group>{["분", "초", "틱"].map((t) => <ToolButton key={t} $on={t === "초"}>{t}</ToolButton>)}</Group>
            <Group>{["1", "3", "5", "10", "15", "30", "45", "60"].map((t) => <ToolButton key={t} $num $on={t === "5"}>{t}</ToolButton>)}</Group>
            <Group><Pick $w={34} aria-label="주기" defaultValue="5"><option>5</option></Pick></Group>
            <Group><Field $w={29} aria-label="표시 개수" defaultValue="2044" /></Group>
            <Muted>/3600</Muted>
            <Group>
              <ToolButton $dim aria-label="봉 추가"><G fill="#444" d="M1 2h1V0h1v2h1v6H3v2H2V8H1zM6 3h1V1h1v2h1v5H8v2H7V8H6zM9 10h2V8h2v2h2v2h-2v2h-2v-2H9z" /></ToolButton>
              <ToolButton $dim aria-label="지표 추가"><G d="M1 6l4-5 4 6 5-6M6 2l6 5M11.500 8v6M8.500 11h6" /></ToolButton>
              <ToolButton $dim aria-label="저장"><Save size={15} /></ToolButton>
              <ToolButton $dim aria-label="설정"><Settings size={14} strokeWidth={2.5} /></ToolButton>
            </Group>
            <TickLabel><input type="checkbox" />D</TickLabel>
          </ToolRow>
          <QuoteRow>
            <Quotes>
              <Quote $w={73} $tone={C.blue}>3,440 ▼</Quote>
              <Quote $w={49} $tone={C.blue}>75</Quote>
              <Quote $w={49} $tone={C.blue} $rule>-2.13%</Quote>
              <Quote $w={70}>1,495,048</Quote>
              <Quote $w={58} $tone={C.blue}>14.43%</Quote>
              <Quote $w={43} $rule>3.56%</Quote>
              <Quote $w={82} $rule>5,148백만</Quote>
              <Quote $w={38}>최우선</Quote>
              <Quote $w={44} $tone={C.blue}>3,435</Quote>
              <Quote $w={50} $tone={C.blue}>3,410</Quote>
              <Quote $w={8} $rule />
              <Quote $w={13}>시</Quote>
              <Quote $w={41} $tone={C.blue}>3,470</Quote>
              <Quote $w={20}>고</Quote>
              <Quote $w={41} $tone={C.red}>3,535</Quote>
              <Quote $w={20}>저</Quote>
              <Quote $w={41} $tone={C.blue}>3,375</Quote>
            </Quotes>
            <OrderButton $bg="#f6d0cc">매수</OrderButton>
            <OrderButton $bg="#c8def4">매도</OrderButton>
          </QuoteRow>
          <Panel>
            <AxisCell $side="left">
              <Overlay>
                {PRICES.map(([y, t]) => (
                  <AxisText key={t} x="39" y={py(y + 4)} textAnchor="end">{t}</AxisText>
                ))}
              </Overlay>
              <GridToggle aria-label="표 보기">
                <svg width="12" height="12" viewBox="0 0 12 12" stroke="#444" fill="none"><path d="M1.500 1.500h9v9h-9zM1.500 4.500h9M4.500 1.500v9M7.500 1.500v9M1.500 7.500h9" /></svg>
              </GridToggle>
              <PriceTag $top={py(292)} $left={0}>3,493<em>+1.84%</em></PriceTag>
              <LastTag $top={py(542)} $left={0}><b>3,440</b>-2.13%</LastTag>
            </AxisCell>
            <PlotCell>
              <MainPlot />
              <Overlay>
                <AxisText x={px(203)} y={py(129)} $tone="#ff0000">최고 3,535 (-2.69%, 08:27)</AxisText>
                <AxisText x={px(216)} y={py(847)} $tone="#0000dd">최저 3,375 (1.93%, 09:09)</AxisText>
                <AxisText x={px(1862)} y={py(429)} textAnchor="end" $tone="#00f000">당일시가 3,470 (-1.28%)</AxisText>
                <AxisText x={px(1862)} y={py(609)} textAnchor="end" $tone="#993300">전일종가 3,430 (-2.42%)</AxisText>
              </Overlay>
              <Legend><LegendBox>YTN 매물대 수(13)</LegendBox></Legend>
            </PlotCell>
            <AxisCell $side="right">
              <Overlay>
                <AxisText x="1" y="12" $tone={C.red}>LC:1.93</AxisText>
                <AxisText x="1" y="24" $tone={C.blue}>HC:-2.69</AxisText>
                {RATES.map(([y, t]) => (
                  <React.Fragment key={t}>
                    <line x1="0" x2="6" y1={py(y)} y2={py(y)} stroke={C.line} />
                    {y < 850 && [1, 2, 3, 4].map((k) => (
                      <line key={k} x1="0" x2="3" y1={py(y + k * 18.7)} y2={py(y + k * 18.7)} stroke={C.line} />
                    ))}
                    <AxisText x="8" y={py(y + 4)}>{t}</AxisText>
                  </React.Fragment>
                ))}
              </Overlay>
              <PriceTag $top={py(292)} $left={4}>3,493<em>+1.84%</em></PriceTag>
              <LastTag $top={py(542)} $left={4}><b>3,440</b>-2.13%</LastTag>
            </AxisCell>

            <AxisCell $side="left">
              <Overlay>
                {[920, 952, 984, 1016].map((y, i) => (
                  <AxisText key={y} x="0" y={sy(y + 4)}>{i % 2 ? "50,000" : "00,000"}</AxisText>
                ))}
                {Array.from({ length: 23 }, (_, i) => 888 + i * 6.4).map((y, i) => (
                  <line key={y} x1={i % 5 === 0 ? 36 : 39} x2="42" y1={sy(y)} y2={sy(y)} stroke={C.line} />
                ))}
              </Overlay>
            </AxisCell>
            <PlotCell><SubPlot /></PlotCell>
            <AxisCell $side="right">
              <Overlay>
                {VOLS.map(([y, t]) => (
                  <React.Fragment key={t}>
                    <line x1="0" x2="6" y1={sy(y)} y2={sy(y)} stroke={C.line} />
                    <line x1="0" x2="3" y1={sy(y + 11)} y2={sy(y + 11)} stroke={C.line} />
                    <AxisText x="45" y={sy(y + 4)} textAnchor="end">{t}</AxisText>
                  </React.Fragment>
                ))}
              </Overlay>
              <CloseSub aria-label="지표 닫기">
                <svg width="8" height="8" viewBox="0 0 8 8" stroke="#fff"><path d="M2 2l4 4M6 2l-4 4" /></svg>
              </CloseSub>
            </AxisCell>

            <AxisCell $side="left" $last />
            <PlotCell $last>
              <Overlay>
                {TIMES.map(([x, t], i) => (
                  <React.Fragment key={x}>
                    <line x1={px(x)} x2={px(x)} y1="0" y2="18" stroke={C.line} />
                    <AxisText x={px(x + 1)} y="12" $bold={i === 0}>{t}</AxisText>
                  </React.Fragment>
                ))}
              </Overlay>
              <TimeTag>2025/04/02(수) 13:46:10</TimeTag>
            </PlotCell>
            <AxisCell $side="right" $last>
              <Overlay><AxisText x="8" y="12">15:19:5</AxisText></Overlay>
            </AxisCell>
          </Panel>
          <BottomRow>
            <NavButton aria-label="왼쪽으로"><G w={13} fill="#000" d="M10 3v9L5 7.500z" /></NavButton>
            <Track><Thumb /></Track>
            <NavButton aria-label="재생"><G w={13} fill="#000" d="M5 3v9l5-4.500z" /></NavButton>
            <NavButton aria-label="빠르게 뒤로"><G w={13} fill="#000" d="M7 3v9L2 7.500zM13 3v9L8 7.500z" /></NavButton>
            <NavButton aria-label="정지"><G w={13} fill="#000" d="M3 3h9v9H3z" /></NavButton>
            <NavButton aria-label="빠르게 앞으로"><G w={13} fill="#000" d="M2 3v9l5-4.500zM8 3v9l5-4.500z" /></NavButton>
            <Zoomer><input type="range" aria-label="확대 비율" defaultValue={58} /></Zoomer>
            {TOOL_ICONS.map(([n, i]) => <IconButton key={n} aria-label={n} $on={n === "십자선"}>{i}</IconButton>)}
          </BottomRow>
        </Body>
      </Frame>
    </>
  );
}
